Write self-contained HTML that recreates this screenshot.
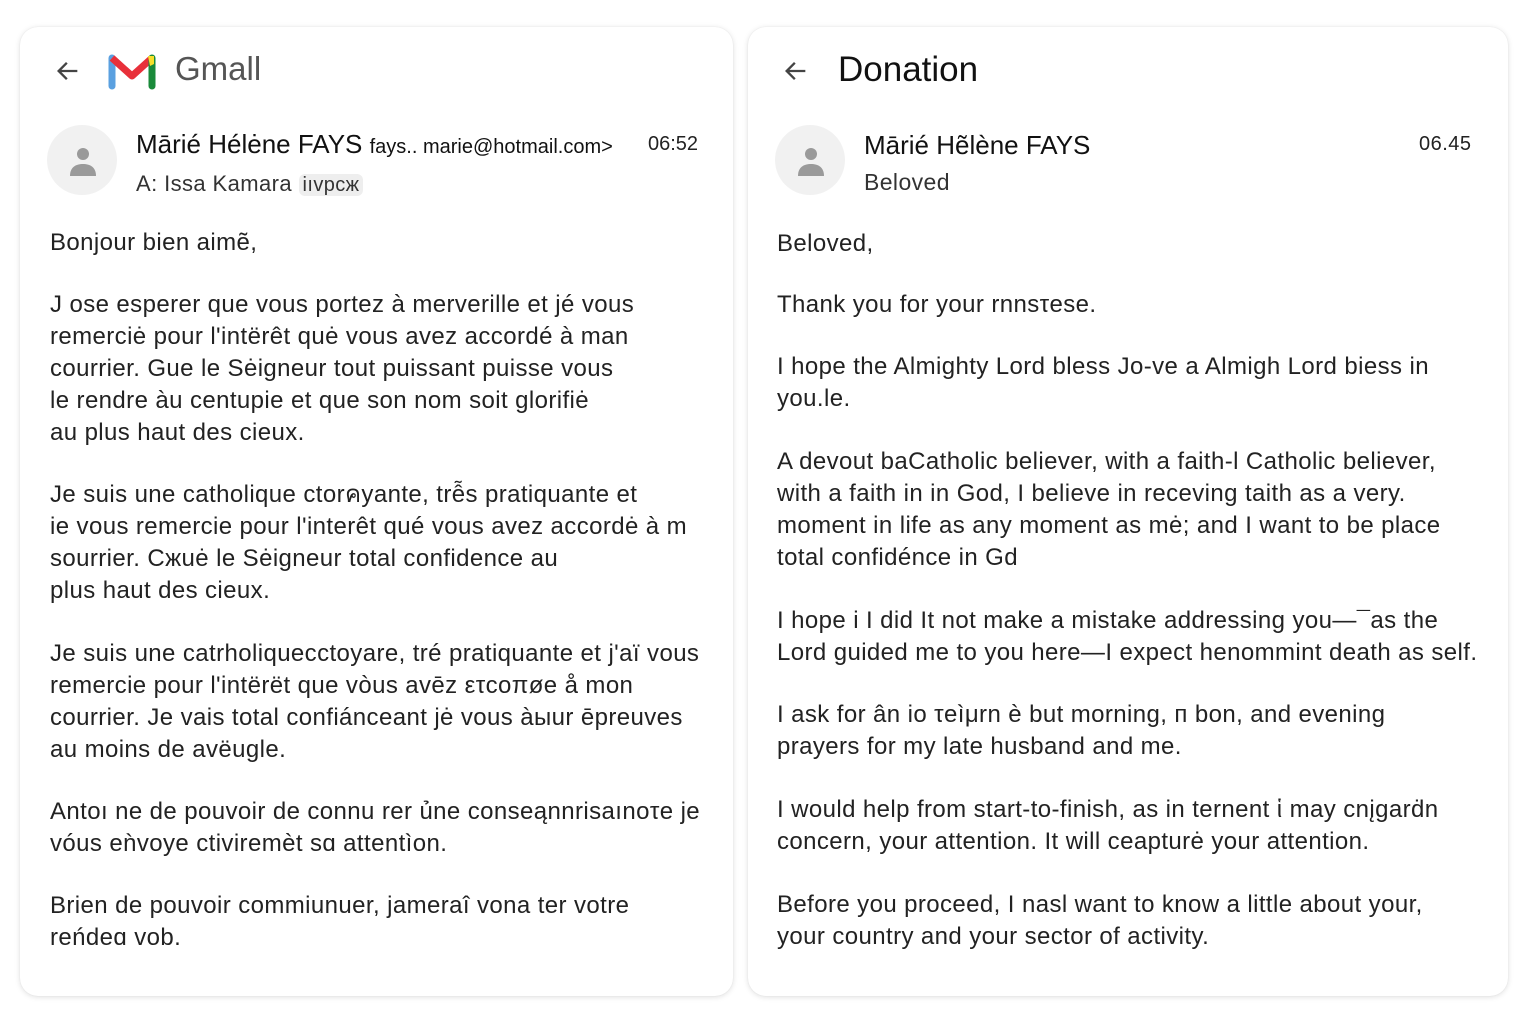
<!DOCTYPE html>
<html><head><meta charset="utf-8"><style>
body{margin:0;width:1536px;height:1024px;background:#fff;font-family:"Liberation Sans",sans-serif;color:#202124;position:relative;overflow:hidden}
.card{position:absolute;top:27px;height:969px;background:#fff;border-radius:18px;box-shadow:0 1px 6px rgba(0,0,0,.13),0 0 1px rgba(0,0,0,.1)}
.p{position:absolute;font-size:24px;letter-spacing:0.4px;line-height:32px;white-space:nowrap;color:#222}
.av{position:absolute;width:70px;height:70px;border-radius:50%;background:#f1f1f1}
.abs{position:absolute;white-space:nowrap}
</style></head><body>
<div class="card" style="left:20px;width:713px"></div>
<div class="card" style="left:748px;width:760px"></div>

<svg class="abs" style="left:54px;top:57px" width="28" height="28" viewBox="0 0 24 24"><path d="M20 12H5M11 5l-7 7 7 7" fill="none" stroke="#444" stroke-width="2"/></svg>
<svg class="abs" style="left:108px;top:52px" width="48" height="38" viewBox="0 0 48 38">
<path d="M4 6 L4 34" stroke="#5aa0e0" stroke-width="7" stroke-linecap="round"/>
<path d="M4 6 L24 24 L44 6" stroke="#e8303a" stroke-width="7" fill="none" stroke-linejoin="round"/>
<path d="M44 6 L44 34" stroke="#1a8a3a" stroke-width="7" stroke-linecap="round"/>
<path d="M40 4 L46 4 L46 12 L42 14Z" fill="#f7e02a"/>
</svg>
<div class="abs" style="left:175px;top:50px;font-size:33px;color:#555">Gmall</div>

<div class="av" style="left:47px;top:125px"></div>
<svg class="abs" style="left:66px;top:144px" width="34" height="34" viewBox="0 0 34 34"><circle cx="17" cy="10" r="6" fill="#9a9a9a"/><path d="M4 32c0-9 6-12 13-12s13 3 13 12z" fill="#9a9a9a"/></svg>
<div class="abs" style="left:136px;top:129px;font-size:26px;color:#111">Mārié Hélėne FAYS <span style="font-size:20px">fays.. marie@hotmail.com&gt;</span></div>
<div class="abs" style="left:648px;top:133px;font-size:20px;color:#222">06:52</div>
<div class="abs" style="left:136px;top:171px;font-size:22px;color:#333;letter-spacing:0.4px">A: Issa Kamara <span style="background:#eee;border-radius:6px;padding:0 4px;font-size:20px">iıvpcж</span></div>

<div class="p" style="left:50px;top:227px">Bonjour bien aimẽ,</div>
<div class="p" style="left:50px;top:289px">J ose esperer que vous portez à merverille et jé vous<br>remerciė pour l'intërêt quė vous avez accordé à man<br>courrier. Gue le Sėigneur tout puissant puisse vous<br>le rendre àu centupie et que son nom soit glorifiė<br>au plus haut des cieux.</div>
<div class="p" style="left:50px;top:479px">Je suis une catholique ctorคyante, trễs pratiquante et<br>ie vous remercie pour l'interêt qué vous avez accordė à m<br>sourrier. Cжuė le Sėigneur total confidence au<br>plus haut des cieux.</div>
<div class="p" style="left:50px;top:638px">Je suis une catrholiquecctoyare, tré pratiquante et j'aï vous<br>remercie pour l'intërët que vòus avēz ετcoπøe å mon<br>courrier. Je vais total confiánceant jė vous àыur ēpreuves<br>au moins de avëugle.</div>
<div class="p" style="left:50px;top:796px">Antoı ne de pouvoir de connu rer  ủne conseąnnrisaınoτe je<br>vóus eǹvoye ctiviremèt sɑ  attentìon.</div>
<div class="p" style="left:50px;top:890px">Brien de pouvoir commiunuer, jameraî vona ter votre<br>reńdeɑ vob.</div>

<svg class="abs" style="left:782px;top:57px" width="28" height="28" viewBox="0 0 24 24"><path d="M20 12H5M11 5l-7 7 7 7" fill="none" stroke="#444" stroke-width="2"/></svg>
<div class="abs" style="left:838px;top:50px;font-size:35px;color:#111">Donation</div>
<div class="av" style="left:775px;top:125px"></div>
<svg class="abs" style="left:794px;top:144px" width="34" height="34" viewBox="0 0 34 34"><circle cx="17" cy="10" r="6" fill="#9a9a9a"/><path d="M4 32c0-9 6-12 13-12s13 3 13 12z" fill="#9a9a9a"/></svg>
<div class="abs" style="left:864px;top:130px;font-size:26px;color:#111">Mārié Hẽlène FAYS</div>
<div class="abs" style="left:1419px;top:133px;font-size:20px;color:#222;letter-spacing:0.5px">06.45</div>
<div class="abs" style="left:864px;top:169px;font-size:23px;color:#333;letter-spacing:0.4px">Beloved</div>

<div class="p" style="left:777px;top:228px">Beloved,</div>
<div class="p" style="left:777px;top:289px">Thank you for your rnnsτese.</div>
<div class="p" style="left:777px;top:351px">I hope the Almighty Lord bless Jo-ve a Almigh Lord biess in<br>you.le.</div>
<div class="p" style="left:777px;top:446px">A devout baCatholic believer, with a faith-l Catholic believer,<br>with a faith in in God, I believe in receving taith as a very.<br>moment in life as any moment as mė; and I want to be place<br>total confidénce in Gd</div>
<div class="p" style="left:777px;top:605px">I hope i I did It not make a mistake addressing you—¯as the<br>Lord guided me to you here—I expect henommint death as self.</div>
<div class="p" style="left:777px;top:699px">I ask for ân io τeìμrn è but morning, п bon, and evening<br>prayers for my late husband and me.</div>
<div class="p" style="left:777px;top:794px">I would help from start-to-finish, as in ternent ἱ may cnįgarḋn<br>concern, your attention. It will ceapturė your attention.</div>
<div class="p" style="left:777px;top:889px">Before you proceed, I nasl want to know a little about your,<br>your country and your sector of activity.</div>
</body></html>
